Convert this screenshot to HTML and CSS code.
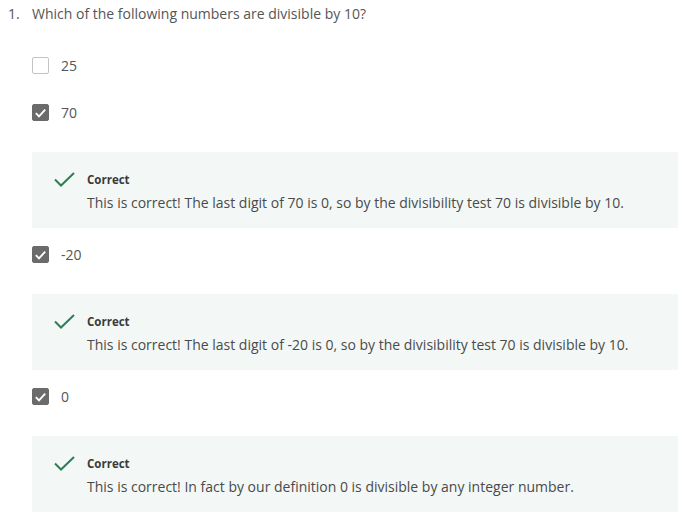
FILE: index.html
```html
<!DOCTYPE html>
<html>
<head>
<meta charset="utf-8">
<link rel="stylesheet" href="styles.css">
</head>
<body>
<div class="question">
  <div class="q-head">
    <span class="q-num">1.</span>
    <span class="q-text">Which of the following numbers are divisible by 10?</span>
  </div>
  <div class="options">
    <div class="option">
      <span class="cb"></span>
      <span class="opt-label">25</span>
    </div>
    <div class="option">
      <span class="cb checked"><svg viewBox="0 0 16 16" width="16" height="16"><path d="M3 8.2 L6.4 11.6 L13 4.4" fill="none" stroke="#fff" stroke-width="2"/></svg></span>
      <span class="opt-label">70</span>
    </div>
    <div class="feedback">
      <svg class="tick" viewBox="0 0 21 15" width="21" height="15"><path d="M1 7.5 L7 13.5 L20 1" fill="none" stroke="#2a7f55" stroke-width="2"/></svg>
      <div class="fb-body">
        <div class="fb-title">Correct</div>
        <div class="fb-text">This is correct! The last digit of 70 is 0, so by the divisibility test 70 is divisible by 10.</div>
      </div>
    </div>
    <div class="option">
      <span class="cb checked"><svg viewBox="0 0 16 16" width="16" height="16"><path d="M3 8.2 L6.4 11.6 L13 4.4" fill="none" stroke="#fff" stroke-width="2"/></svg></span>
      <span class="opt-label">-20</span>
    </div>
    <div class="feedback">
      <svg class="tick" viewBox="0 0 21 15" width="21" height="15"><path d="M1 7.5 L7 13.5 L20 1" fill="none" stroke="#2a7f55" stroke-width="2"/></svg>
      <div class="fb-body">
        <div class="fb-title">Correct</div>
        <div class="fb-text">This is correct! The last digit of -20 is 0, so by the divisibility test 70 is divisible by 10.</div>
      </div>
    </div>
    <div class="option">
      <span class="cb checked"><svg viewBox="0 0 16 16" width="16" height="16"><path d="M3 8.2 L6.4 11.6 L13 4.4" fill="none" stroke="#fff" stroke-width="2"/></svg></span>
      <span class="opt-label">0</span>
    </div>
    <div class="feedback">
      <svg class="tick" viewBox="0 0 21 15" width="21" height="15"><path d="M1 7.5 L7 13.5 L20 1" fill="none" stroke="#2a7f55" stroke-width="2"/></svg>
      <div class="fb-body">
        <div class="fb-title">Correct</div>
        <div class="fb-text">This is correct! In fact by our definition 0 is divisible by any integer number.</div>
      </div>
    </div>
  </div>
</div>
</body>
</html>
```
FILE: styles.css
```css
* { box-sizing: border-box; }
html, body { margin: 0; padding: 0; background: #fff; }
body {
  font-family: "Open Sans", "Liberation Sans", sans-serif;
  color: #4a4a4a;
  font-size: 14px;
}
.question { padding: 4px 0 0 8px; }
.q-head { display: flex; line-height: 20px; color: #555; }
.q-num { width: 24px; }
.options { padding: 33px 0 0 24px; display: flex; flex-direction: column; }
.option { display: flex; align-items: center; height: 17px; margin-bottom: 30px; }
.option + .feedback { margin-top: 1px; }
.cb {
  width: 17px; height: 17px; border: 1.5px solid #c4c4c4; border-radius: 2px;
  display: flex; align-items: center; justify-content: center; flex: none;
}
.cb.checked { background: #6b6b6b; border-color: #6b6b6b; }
.cb svg { display: block; }
.opt-label { margin-left: 12px; color: #555; }
.feedback {
  background: #f3f8f7;
  display: flex;
  padding: 20px 0 0 22px;
  height: 76px;
  margin-bottom: 18px;
}
.tick { flex: none; }
.fb-body { margin-left: 12px; }
.fb-title { font-size: 11.5px; font-weight: 700; color: #3a3a3a; line-height: 16px; }
.fb-text { margin-top: 5px; line-height: 20px; color: #4a4a4a; }
```
